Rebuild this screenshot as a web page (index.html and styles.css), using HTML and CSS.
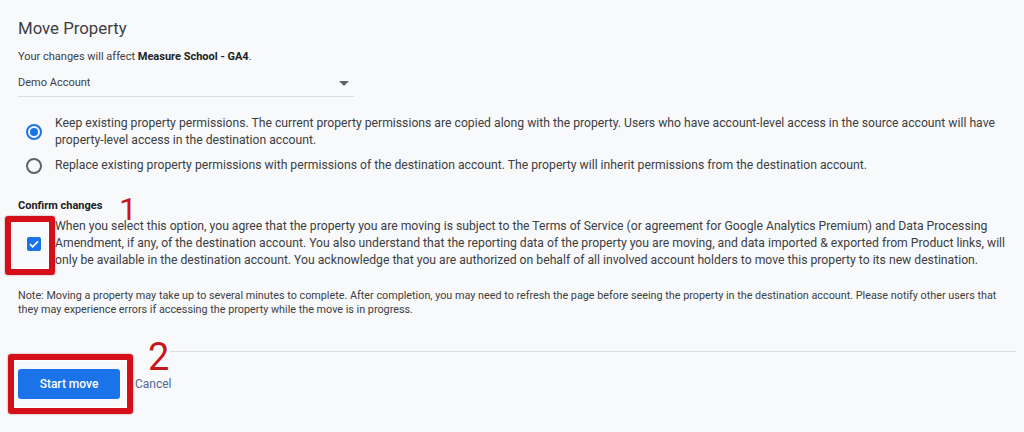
FILE: index.html
```html
<!DOCTYPE html>
<html lang="en">
<head>
<meta charset="utf-8">
<title>Move Property</title>
<link rel="stylesheet" href="styles.css">
</head>
<body>
<main class="page">
  <h1 class="title">Move Property</h1>
  <p class="affect">Your changes will affect <b>Measure School - GA4</b>.</p>
  <div class="select">
    <span>Demo Account</span>
    <svg class="caret" width="10" height="5" viewBox="0 0 10 5"><path d="M0 0h10L5 5z" fill="#5f6368"/></svg>
  </div>
  <div class="options">
    <div class="option">
      <span class="radio checked"></span>
      <span class="opt-text">Keep existing property permissions. The current property permissions are copied along with the property. Users who have account-level access in the source account will have property-level access in the destination account.</span>
    </div>
    <div class="option">
      <span class="radio"></span>
      <span class="opt-text">Replace existing property permissions with permissions of the destination account. The property will inherit permissions from the destination account.</span>
    </div>
  </div>
  <h2 class="confirm-title">Confirm changes</h2>
  <div class="confirm">
    <span class="check-wrap">
      <span class="checkbox">
        <svg width="14" height="14" viewBox="0 0 14 14"><path d="M3 7.2l2.6 2.6L11 4.4" fill="none" stroke="#fff" stroke-width="1.8"/></svg>
      </span>
      <span class="annot-box box1"></span>
    </span>
    <p class="confirm-text">When you select this option, you agree that the property you are moving is subject to the Terms of Service (or agreement for Google Analytics Premium) and Data Processing Amendment, if any, of the destination account. You also understand that the reporting data of the property you are moving, and data imported &amp; exported from Product links, will only be available in the destination account. You acknowledge that you are authorized on behalf of all involved account holders to move this property to its new destination.</p>
  </div>
  <span class="num num1">1</span>
  <p class="note">Note: Moving a property may take up to several minutes to complete. After completion, you may need to refresh the page before seeing the property in the destination account. Please notify other users that they may experience errors if accessing the property while the move is in progress.</p>
  <div class="divider"></div>
  <div class="actions">
    <span class="btn-wrap">
      <button class="primary">Start move</button>
      <span class="annot-box box2"></span>
    </span>
    <button class="cancel">Cancel</button>
  </div>
  <span class="num num2">2</span>
</main>
</body>
</html>
```

FILE: styles.css
```css
html, body {
  margin: 0;
  padding: 0;
  background: #f8f9fa;
}
body {
  font-family: Roboto, "Liberation Sans", Arial, sans-serif;
  color: #3c4043;
  width: 1024px;
  height: 432px;
  overflow: hidden;
}
.page {
  position: relative;
  padding: 18px 12px 0 18px;
}
.title {
  margin: 0;
  font-size: 16.8px;
  line-height: 20px;
  font-weight: 400;
  color: #3c4043;
}
.affect {
  margin: 11px 0 0;
  font-size: 11px;
  line-height: 16px;
}
.affect b {
  font-weight: 700;
  color: #202124;
}
.select {
  margin-top: 6px;
  width: 336px;
  display: flex;
  align-items: center;
  justify-content: space-between;
  padding: 4px 0 5px;
  border-bottom: 1px solid #dadce0;
  font-size: 11px;
  line-height: 16px;
}
.caret {
  margin-right: 5px;
}
.options {
  margin-top: 18px;
  display: flex;
  flex-direction: column;
  gap: 8px;
}
.option {
  display: flex;
  align-items: center;
  gap: 13px;
  padding-left: 8px;
}
.opt-text {
  font-size: 12.2px;
  line-height: 17px;
}
.radio {
  flex: none;
  width: 16px;
  height: 16px;
  box-sizing: border-box;
  border: 2px solid #5f6368;
  border-radius: 50%;
  display: flex;
  align-items: center;
  justify-content: center;
}
.radio.checked {
  border-color: #1a73e8;
}
.radio.checked::after {
  content: "";
  width: 8px;
  height: 8px;
  border-radius: 50%;
  background: #1a73e8;
}
.confirm-title {
  margin: 25px 0 0;
  font-size: 11px;
  line-height: 14px;
  font-weight: 700;
  color: #202124;
}
.confirm {
  margin-top: 5px;
  display: flex;
  align-items: center;
  gap: 14px;
  padding-left: 9px;
}
.check-wrap {
  position: relative;
  flex: none;
  width: 14px;
  height: 14px;
}
.checkbox {
  display: block;
  width: 14px;
  height: 14px;
  border-radius: 2px;
  background: #1a73e8;
}
.checkbox svg {
  display: block;
}
.confirm-text {
  margin: 0;
  font-size: 12.2px;
  line-height: 17px;
}
.annot-box {
  position: absolute;
  border: 6px solid #d40f1a;
  border-radius: 3px;
  box-shadow: 0 0 2px rgba(120, 0, 0, 0.5), inset 0 0 0 1px rgba(255, 255, 255, 0.8);
}
.box1 {
  left: -22px;
  top: -21px;
  width: 38px;
  height: 47px;
}
.box2 {
  left: -10px;
  top: -15px;
  width: 113px;
  height: 48px;
}
.num {
  position: absolute;
  color: #c8161d;
  font-family: Roboto, "Liberation Sans", sans-serif;
  font-weight: 400;
  line-height: 1;
  text-shadow: 0 0 2px #fff, 0 0 2px #fff, 0 0 1px #fff;
}
.num1 {
  left: 119px;
  top: 193px;
  font-size: 32px;
}
.num2 {
  left: 148px;
  top: 338px;
  font-size: 38px;
}
.note {
  margin: 20px 0 0;
  font-size: 10.8px;
  line-height: 14px;
}
.divider {
  margin: 34px -4px 0 152px;
  height: 1px;
  background: #dadce0;
}
.actions {
  margin-top: 17px;
  display: flex;
  align-items: center;
  gap: 15px;
}
.btn-wrap {
  position: relative;
  display: block;
}
.primary {
  display: block;
  width: 102px;
  height: 30px;
  border: 0;
  border-radius: 3px;
  background: #1a73e8;
  color: #fff;
  font-family: Roboto, "Liberation Sans", Arial, sans-serif;
  font-size: 12px;
  font-weight: 500;
  padding: 0;
}
.cancel {
  border: 0;
  background: none;
  padding: 0;
  font-family: Roboto, "Liberation Sans", Arial, sans-serif;
  font-size: 12px;
  color: #4f6a96;
}
```
